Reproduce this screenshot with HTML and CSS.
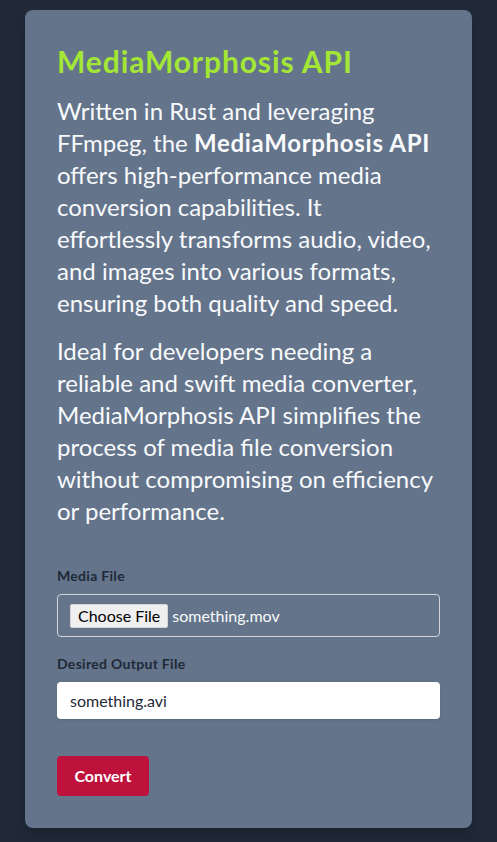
FILE: index.html
```html
<!DOCTYPE html>
<html lang="en">
<head>
<meta charset="utf-8">
<title>MediaMorphosis API</title>
<link rel="stylesheet" href="styles.css">
</head>
<body>
  <main class="card">
    <h1 class="title">MediaMorphosis API</h1>
    <p class="lead">Written in Rust and leveraging FFmpeg, the <strong>MediaMorphosis API</strong> offers high-performance media conversion capabilities. It effortlessly transforms audio, video, and images into various formats, ensuring both quality and speed.</p>
    <p class="lead">Ideal for developers needing a reliable and swift media converter, MediaMorphosis API simplifies the process of media file conversion without compromising on efficiency or performance.</p>
    <form class="form">
      <div class="field">
        <label class="label">Media File</label>
        <div class="file-input">
          <span class="file-btn">Choose File</span>
          <span class="file-name">something.mov</span>
        </div>
      </div>
      <div class="field">
        <label class="label" for="out">Desired Output File</label>
        <input class="text-input" id="out" type="text" value="something.avi">
      </div>
      <button class="convert" type="button">Convert</button>
    </form>
  </main>
</body>
</html>
```
FILE: styles.css
```css
* { box-sizing: border-box; }
html, body { margin: 0; }
body {
  background: #1f2937;
  font-family: Lato, "Open Sans", sans-serif;
  padding: 10px 25px 20px;
}
.card {
  background: #64748b;
  border-radius: 8px;
  padding: 32px;
  box-shadow: 0 10px 15px -3px rgba(0,0,0,0.15), 0 4px 6px -4px rgba(0,0,0,0.15);
}
.title {
  margin: 0 0 16px;
  padding-top: 1px;
  color: #a3e635;
  font-size: 30px;
  line-height: 36px;
  font-weight: 700;
  letter-spacing: 0.9px;
}
.lead {
  margin: 0 0 16px;
  color: #f8fafc;
  font-size: 24px;
  line-height: 32px;
}
.lead strong { font-weight: 700; letter-spacing: 0.7px; }
.form { margin-top: 39px; }
.field { margin-bottom: 17px; }
.label {
  display: block;
  color: #1f2937;
  font-size: 14px;
  line-height: 20px;
  font-weight: 700;
  letter-spacing: 0.3px;
  margin-bottom: 8px;
}
.file-input {
  display: flex;
  align-items: center;
  height: 43px;
  padding: 0 12px;
  border: 1px solid #d1d5db;
  border-radius: 4px;
}
.file-btn {
  background: #efefef;
  border: 1px solid #d6d6d6;
  border-radius: 2px;
  color: #000;
  font-size: 16px;
  line-height: 22px;
  padding: 0 7px;
  margin-right: 4px;
}
.file-name { color: #f8fafc; font-size: 16px; }
.text-input {
  display: block;
  width: 100%;
  height: 37px;
  border: 0;
  border-radius: 4px;
  padding: 8px 13px;
  font-family: inherit;
  font-size: 16px;
  color: #1f2937;
  background: #fff;
  box-shadow: 0 1px 3px rgba(0,0,0,0.1);
}
.convert {
  margin-top: 20px;
  background: #be123c;
  color: #fff;
  border: 0;
  border-radius: 4px;
  font-family: inherit;
  font-size: 16px;
  font-weight: 700;
  line-height: 24px;
  padding: 8px 16px;
  width: 92px;
}
```
